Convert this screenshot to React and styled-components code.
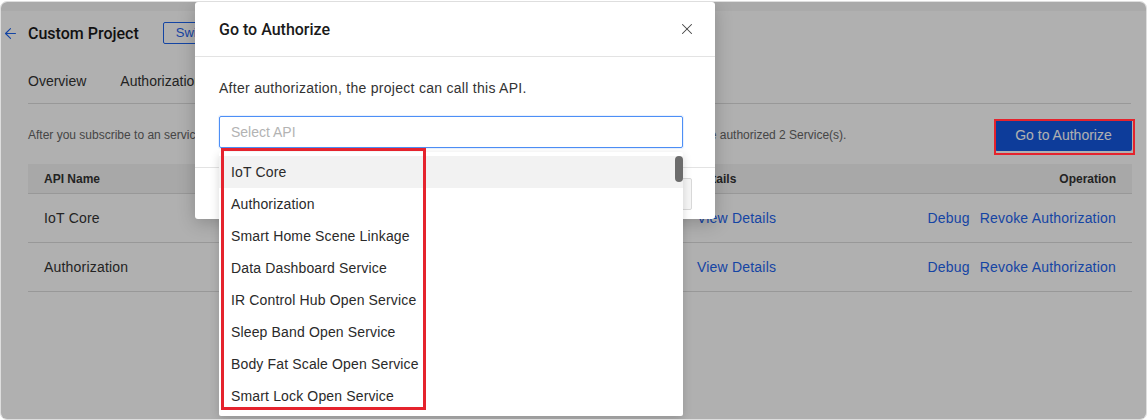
import React from "react";
import styled, { createGlobalStyle } from "styled-components";
import { ArrowLeft, X } from "lucide-react";

const GlobalStyle = createGlobalStyle`
    html, body {
        margin: 0;
        padding: 0;
        background: #ffffff;
        font-family: "Liberation Sans", Arial, sans-serif;
    }
    * {
        box-sizing: border-box;
    }
`;

const apiOptions = [
    "IoT Core",
    "Authorization",
    "Smart Home Scene Linkage",
    "Data Dashboard Service",
    "IR Control Hub Open Service",
    "Sleep Band Open Service",
    "Body Fat Scale Open Service",
    "Smart Lock Open Service",
];

const authorized = ["IoT Core", "Authorization"];

const App = () => {
    return (
        <Window>
            <GlobalStyle />
            <Page>
                <TopStrip />
                <Content>
                    <TitleRow>
                        <BackButton>
                            <ArrowLeft size={17} strokeWidth={1.6} />
                        </BackButton>
                        <Title>Custom Project</Title>
                        <SwitchButton>Switch Project</SwitchButton>
                    </TitleRow>
                    <TabBar>
                        <Tab>Overview</Tab>
                        <Tab>Authorization</Tab>
                    </TabBar>
                    <InfoRow>
                        <InfoText>
                            After you subscribe to an service, you can
                            authorize the project to call the APIs of that
                            service in the console. Up to now, you have
                            authorized 2 Service(s).
                        </InfoText>
                        <PrimaryButton>Go to Authorize</PrimaryButton>
                    </InfoRow>
                    <Table>
                        <HeadRow>
                            <span>API Name</span>
                            <span>Details</span>
                            <span>Operation</span>
                        </HeadRow>
                        {authorized.map((name) => (
                            <BodyRow key={name}>
                                <span>{name}</span>
                                <LinkText>View Details</LinkText>
                                <Operations>
                                    <LinkText>Debug</LinkText>
                                    <LinkText>Revoke Authorization</LinkText>
                                </Operations>
                            </BodyRow>
                        ))}
                    </Table>
                </Content>
            </Page>

            <Mask />

            <Modal>
                <ModalHeader>
                    <ModalTitle>Go to Authorize</ModalTitle>
                    <CloseButton>
                        <X size={18} strokeWidth={1.4} />
                    </CloseButton>
                </ModalHeader>
                <ModalBody>
                    <ModalText>
                        After authorization, the project can call this API.
                    </ModalText>
                    <SelectWrap>
                        <SelectBox>Select API</SelectBox>
                        <Dropdown>
                            {apiOptions.map((opt, i) => (
                                <Option key={opt} active={i === 0}>
                                    {opt}
                                </Option>
                            ))}
                            <ScrollThumb />
                            <Highlight />
                        </Dropdown>
                    </SelectWrap>
                </ModalBody>
                <ModalFooter>
                    <GhostButton>Cancel</GhostButton>
                    <DisabledButton>OK</DisabledButton>
                </ModalFooter>
            </Modal>

            <ButtonHighlight />
        </Window>
    );
};

const Window = styled.div`
    position: relative;
    width: 1147px;
    height: 419px;
    margin-top: 1px;
    border: 1px solid #dedede;
    border-radius: 7px;
    overflow: hidden;
    background: #ffffff;
`;

const Page = styled.div`
    display: flex;
    flex-direction: column;
    height: 100%;
    color: #333333;
`;

const TopStrip = styled.div`
    height: 9px;
    background: #f7f7f7;
`;

const Content = styled.div`
    display: flex;
    flex-direction: column;
    padding: 0 15px 0 27px;
`;

const TitleRow = styled.div`
    display: flex;
    align-items: center;
    height: 22px;
    margin-top: 11px;
    position: relative;
`;

const BackButton = styled.span`
    position: absolute;
    left: -26px;
    display: flex;
    color: #1e64ee;
`;

const Title = styled.div`
    font-family: Roboto, "Liberation Sans", sans-serif;
    font-size: 16px;
    font-weight: 500;
    color: #1a1a1a;
`;

const SwitchButton = styled.div`
    margin-left: 24px;
    height: 22px;
    padding: 0 12px;
    border: 1px solid #1e64ee;
    border-radius: 2px;
    color: #1e64ee;
    font-size: 13px;
    line-height: 20px;
`;

const TabBar = styled.div`
    display: flex;
    gap: 34px;
    margin-top: 19px;
    border-bottom: 1px solid #dddddd;
`;

const Tab = styled.div`
    height: 40px;
    line-height: 36px;
    padding-bottom: 4px;
    font-size: 14px;
    color: #333333;
`;

const InfoRow = styled.div`
    display: flex;
    align-items: center;
    justify-content: space-between;
    margin-top: 15px;
    height: 32px;
`;

const InfoText = styled.div`
    font-size: 12px;
    color: #666666;
    white-space: nowrap;
`;

const PrimaryButton = styled.div`
    width: 137px;
    height: 32px;
    line-height: 32px;
    text-align: center;
    background: #1457e0;
    color: #ffffff;
    font-size: 14px;
    border-radius: 2px;
    margin-right: -1px;
`;

const Table = styled.div`
    margin-top: 13px;
    width: 1104px;
`;

const HeadRow = styled.div`
    display: grid;
    grid-template-columns: 653px 1fr auto;
    align-items: center;
    height: 30px;
    padding: 0 16px;
    background: #f3f3f3;
    border-bottom: 1px solid #dddddd;
    font-size: 12px;
    font-weight: 700;
    color: #333333;
`;

const BodyRow = styled.div`
    display: grid;
    grid-template-columns: 653px 1fr auto;
    align-items: center;
    height: 49px;
    padding: 0 16px;
    border-bottom: 1px solid #dddddd;
    font-size: 14px;
    letter-spacing: 0.2px;
    color: #333333;
`;

const Operations = styled.div`
    display: flex;
    gap: 10px;
`;

const LinkText = styled.span`
    color: #1e64ee;
`;

const Mask = styled.div`
    position: absolute;
    inset: 0;
    background: rgba(0, 0, 0, 0.31);
`;

const Modal = styled.div`
    position: absolute;
    left: 194px;
    top: 0;
    width: 520px;
    background: #ffffff;
    border-radius: 3px;
    box-shadow: 0 4px 18px rgba(0, 0, 0, 0.22);
    color: #333333;
`;

const ModalHeader = styled.div`
    display: flex;
    align-items: center;
    justify-content: space-between;
    height: 55px;
    padding: 0 19px 0 24px;
    border-bottom: 1px solid #e3e3e3;
`;

const ModalTitle = styled.div`
    font-family: Roboto, "Liberation Sans", sans-serif;
    font-size: 16px;
    font-weight: 500;
    color: #1a1a1a;
`;

const CloseButton = styled.span`
    display: flex;
    color: #444444;
`;

const ModalBody = styled.div`
    padding: 20px 32px 19px 24px;
`;

const ModalText = styled.div`
    font-size: 14px;
    line-height: 22px;
    letter-spacing: 0.28px;
    color: #333333;
`;

const SelectWrap = styled.div`
    position: relative;
    margin-top: 17px;
`;

const SelectBox = styled.div`
    height: 32px;
    line-height: 30px;
    padding: 0 11px;
    border: 1px solid #4d8ff6;
    border-radius: 2px;
    box-shadow: 0 0 0 1px rgba(77, 143, 246, 0.12);
    font-size: 14px;
    color: #b3b3b3;
`;

const Dropdown = styled.div`
    position: absolute;
    top: 36px;
    left: 0;
    right: 0;
    padding: 4px 0;
    background: #ffffff;
    border-radius: 2px;
    box-shadow: 0 3px 10px rgba(0, 0, 0, 0.16);
    z-index: 2;
`;

const Option = styled.div`
    height: 32px;
    line-height: 32px;
    padding: 0 12px;
    font-size: 14px;
    letter-spacing: 0.15px;
    color: #2a2a2a;
    background: ${(p) => (p.active ? "#f2f2f2" : "#ffffff")};
`;

const ScrollThumb = styled.div`
    position: absolute;
    top: 4px;
    right: 0;
    width: 8px;
    height: 26px;
    border-radius: 4px;
    background: #6c6c6c;
`;

const Highlight = styled.div`
    position: absolute;
    top: -4px;
    left: 2px;
    width: 205px;
    height: 262px;
    border: 3px solid #e5232d;
`;

const ModalFooter = styled.div`
    display: flex;
    justify-content: flex-end;
    gap: 8px;
    height: 52px;
    padding: 10px 23px 10px 24px;
    border-top: 1px solid #e3e3e3;
`;

const GhostButton = styled.div`
    height: 32px;
    line-height: 30px;
    padding: 0 16px;
    border: 1px solid #d9d9d9;
    border-radius: 2px;
    font-size: 14px;
    color: #333333;
`;

const DisabledButton = styled(GhostButton)`
    background: #f6f6f6;
    color: #bbbbbb;
`;

const ButtonHighlight = styled.div`
    position: absolute;
    left: 993px;
    top: 117px;
    width: 141px;
    height: 36px;
    border: 2px solid #e5232d;
`;

export default App;
